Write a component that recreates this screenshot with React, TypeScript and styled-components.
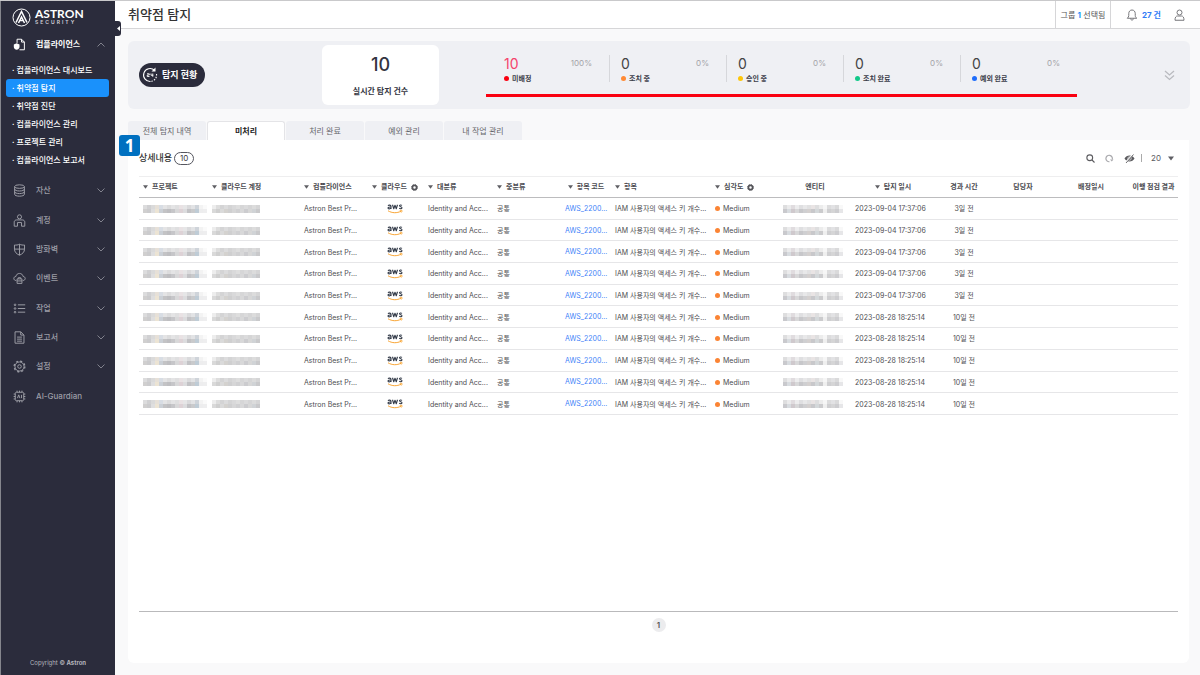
import React from "react";
import styled, { createGlobalStyle, css } from "styled-components";

const GlobalStyle = createGlobalStyle`
  * { box-sizing: border-box; }
  html, body, #root { height: 100%; }
  body {
    margin: 0;
    background: #f9f9fa;
    color: #3b3b3f;
    font-family: Inter, "Noto Sans CJK KR", sans-serif;
    font-size: 8px;
    line-height: 12px;
  }
  button, select { font: inherit; color: inherit; border: 0; background: none; padding: 0; cursor: pointer; }
  a { color: inherit; text-decoration: none; }
  ul { list-style: none; margin: 0; padding: 0; }
  h1, h2, p { margin: 0; }
  svg { display: block; flex: none; }
`;

const Shell = styled.div`
  display: flex;
  min-height: 100%;
  border-top: 1px solid #c9c9cb;
`;

/* Sidebar */
const Sidebar = styled.aside`
  display: flex;
  flex-direction: column;
  flex: 0 0 115px;
  background: #2b2c3c;
  border-left: 1px solid #85868d;
  color: #fff;
`;

const Brand = styled.a`
  display: flex;
  align-items: center;
  gap: 4px;
  height: 30px;
  padding: 2px 0 0 11px;
`;

const Wordmark = styled.span`
  display: flex;
  flex-direction: column;
  padding-top: 1px;
`;

const BrandName = styled.span`
  font: 700 12px/10px Lato, sans-serif;
`;

const BrandSub = styled.span`
  font: 600 5px/7px Inter, sans-serif;
  letter-spacing: 2px;
  color: #d4d4da;
`;

const Group = styled.button<{ $open?: boolean }>`
  display: flex;
  align-items: center;
  gap: 10px;
  width: 100%;
  height: ${(p) => (p.$open ? "27px" : "auto")};
  padding: 0 10px 0 12px;
  text-align: left;
  font-weight: ${(p) => (p.$open ? 700 : 500)};
  color: ${(p) => (p.$open ? "#fff" : "#9c9da6")};
  > span { flex: 1; line-height: 13px; }
`;

const SubMenu = styled.ul`
  display: grid;
  grid-auto-rows: 1fr;
  height: 108px;
  padding: 3px 6px 0 5px;
`;

const SubLink = styled.a<{ $active?: boolean }>`
  display: block;
  height: 18px;
  padding-left: 6px;
  border-radius: 3px;
  line-height: 18px;
  font-weight: 500;
  background: ${(p) => (p.$active ? "#1a91fb" : "transparent")};
`;

const Groups = styled.div`
  display: grid;
  grid-auto-rows: 1fr;
  height: 235px;
  margin-top: 10px;
`;

const Copyright = styled.p`
  margin-top: auto;
  padding-bottom: 6px;
  text-align: center;
  font-size: 6px;
  color: #b4b5bd;
`;

/* Main area */
const Main = styled.main`
  flex: 1;
  min-width: 0;
  display: flex;
  flex-direction: column;
`;

const TopBar = styled.header`
  display: flex;
  align-items: stretch;
  height: 28px;
  background: #fff;
  border-bottom: 1px solid #d6d6d8;
`;

const Collapse = styled.button`
  position: absolute;
  left: 115px;
  top: 21px;
  width: 6px;
  height: 15px;
  display: flex;
  align-items: center;
  justify-content: center;
  background: #2b2c3c;
  border-radius: 0 3px 3px 0;
`;

const PageTitle = styled.h1`
  flex: 1;
  padding-left: 13px;
  font-size: 13px;
  line-height: 27px;
  font-weight: 500;
  color: #333;
`;

const GroupPick = styled.button`
  width: 56px;
  border-left: 1px solid #d6d6d8;
  border-right: 1px solid #d6d6d8;
  color: #555;
  b { color: #1a91fb; }
`;

const UserTools = styled.div`
  display: flex;
  align-items: center;
  width: 89px;
  padding: 0 15px;
  justify-content: space-between;
  color: #77777b;
`;

const Alerts = styled.button`
  display: flex;
  align-items: center;
  gap: 4px;
  b { color: #2f7bf6; }
`;

const Content = styled.div`
  flex: 1;
  display: flex;
  flex-direction: column;
  padding: 12px 11px 12px 13px;
`;

const Summary = styled.section`
  display: flex;
  align-items: center;
  height: 68px;
  padding: 0 15px 0 11px;
  margin-right: -1px;
  border-radius: 6px;
  background: #eff0f4;
`;

const StatusPill = styled.h2`
  display: flex;
  align-items: center;
  gap: 4px;
  height: 24px;
  width: 66px;
  padding-left: 3px;
  border-radius: 12px;
  background: #2b2c3c;
  color: #fff;
  font-size: 9px;
  font-weight: 700;
  white-space: nowrap;
`;

const TotalCard = styled.div`
  width: 117px;
  height: 60px;
  margin-left: 117px;
  padding-top: 9px;
  border-radius: 6px;
  background: #fff;
  text-align: center;
  color: #33343f;
  font-weight: 700;
  strong { display: block; margin-bottom: 9px; font-size: 18px; line-height: 22px; font-weight: 500; }
`;

const Stats = styled.ul`
  display: flex;
  align-self: flex-start;
  margin: 0 auto 0 47px;
  padding: 14px 0 12px;
  border-bottom: 3px solid #fa0010;
`;

const Stat = styled.li`
  width: 117px;
  height: 27px;
  padding: 0 17px 0 11px;
  border-left: 1px solid #d6d7db;
  &:first-child { width: 123px; border-left-color: transparent; padding-left: 17px; }
`;

const StatTop = styled.div<{ $hot?: boolean }>`
  display: flex;
  justify-content: space-between;
  line-height: 16px;
  color: #a3a3a7;
  span { font-size: 14px; color: ${(p) => (p.$hot ? "#f5436b" : "#444")}; line-height: 18px; }
`;

const Dot = styled.i<{ $color: string }>`
  display: inline-block;
  width: 5px;
  height: 5px;
  margin-right: 3px;
  border-radius: 50%;
  background: ${(p) => p.$color};
  vertical-align: 0;
`;

const StatLabel = styled.div`
  font-size: 7px;
  font-weight: 700;
  color: #3b3c48;
`;

const Tabs = styled.div`
  display: flex;
  gap: 1px;
  margin-top: 12px;
`;

const Tab = styled.button<{ $active?: boolean }>`
  width: 78px;
  height: 19px;
  border-radius: 3px 3px 0 0;
  background: #eff0f4;
  color: #66666b;
  ${(p) =>
    p.$active &&
    css`
      background: #fff;
      border: 1px solid #e4e4e7;
      border-bottom: 0;
      color: #222;
      font-weight: 700;
    `}
`;

const Panel = styled.section`
  flex: 1;
  display: flex;
  flex-direction: column;
  padding: 8px 11px 0;
  border-radius: 0 0 6px 6px;
  background: #fff;
`;

const PanelHead = styled.div`
  display: flex;
  align-items: center;
  height: 20px;
  margin-bottom: 8px;
  h2 { font-size: 9px; font-weight: 500; color: #333; }
`;

const Count = styled.span`
  margin: 0 auto 0 2px;
  width: 20px;
  height: 13px;
  border: 1px solid #55565f;
  border-radius: 7px;
  text-align: center;
  line-height: 11px;
`;

const Tools = styled.div`
  display: flex;
  align-items: center;
  gap: 10px;
  padding-right: 4px;
  color: #5b5b5f;
`;

const Rule = styled.span`
  width: 1px;
  height: 8px;
  margin: 0 -1px 0 -4px;
  background: #aaa;
`;

const PageSize = styled.label`
  display: flex;
  align-items: center;
  gap: 3px;
  select { appearance: none; width: 14px; outline: 0; }
`;

const Grid = styled.table`
  width: 100%;
  height: 239px;
  table-layout: fixed;
  border-collapse: collapse;
  font-size: 7px;
  line-height: 10px;
  color: #4d4d51;
`;

const Th = styled.th<{ $center?: boolean }>`
  height: 21px;
  padding: 0 0 0 ${(p) => (p.$center ? "0" : "4px")};
  border-top: 1px solid #eeeeef;
  border-bottom: 1px solid #bcbcbe;
  font-weight: 700;
  color: #4a4a4f;
  white-space: nowrap;
  > div { display: flex; align-items: center; gap: 4px; justify-content: ${(p) => (p.$center ? "center" : "flex-start")}; }
`;

const Td = styled.td<{ $center?: boolean }>`
  padding: 2px 0 0 ${(p) => (p.$center ? "0" : "4px")};
  border-bottom: 1px solid #e6e6e8;
  white-space: nowrap;
  text-align: ${(p) => (p.$center ? "center" : "left")};
  > a { color: #3f83f8; vertical-align: 1px; }
`;

const AwsMark = styled.svg`
  margin: -2px auto 0;
`;

const Pager = styled.nav`
  display: flex;
  justify-content: center;
  margin-top: auto;
  padding: 6px 0 31px;
  border-top: 1px solid #b9b9bb;
  button { width: 14px; height: 14px; border-radius: 50%; background: #ececee; font-weight: 600; color: #555; }
`;

const StepBadge = styled.span`
  position: absolute;
  left: 119px;
  top: 135px;
  width: 21px;
  height: 21px;
  border-radius: 3px;
  background: #0070c0;
  color: #fff;
  text-align: center;
  font: 700 17px/21px "Noto Sans", sans-serif;
`;

const Triangle = ({ w = 5 }: { w?: number }) => (
  <svg width={w} height={w - 1} viewBox="0 0 6 4"><path d="M0 0h6L3 4z" fill="#5f5f64" /></svg>
);

const Chevron = ({ up }: { up?: boolean }) => (
  <svg width="8" height="5" viewBox="0 0 8 5" fill="none" stroke="#8b8c96" strokeWidth="0.9">
    <path d={up ? "M.5 4.5 4 1l3.5 3.5" : "M.5 .5 4 4 7.5 .5"} />
  </svg>
);

const Gear = () => (
  <svg width="7" height="7" viewBox="0 0 14 14">
    <circle cx="7" cy="7" r="4.2" fill="none" stroke="#55555a" strokeWidth="3.4" />
    <circle cx="7" cy="7" r="6" fill="none" stroke="#55555a" strokeWidth="1.8" strokeDasharray="2.4 2.312" />
  </svg>
);

const icons: Record<string, React.ReactNode> = {
  compliance: (
    <>
      <path d="M5 6V1.5h5.5L14 5v9.5H8M10.5 1.5V5H14" />
      <path d="M4.5 6.500 8 8v3c0 2-2 3-3.500 3.500C3 14 1 13 1 11V8z" fill="#fff" stroke="none" />
    </>
  ),
  asset: (
    <>
      <ellipse cx="8" cy="3.2" rx="6" ry="2.2" />
      <path d="M2 3.2v9.6c0 1.2 2.7 2.2 6 2.2s6-1 6-2.2V3.2M2 6.4c0 1.2 2.7 2.2 6 2.2s6-1 6-2.2M2 9.6c0 1.2 2.7 2.2 6 2.2s6-1 6-2.2" />
    </>
  ),
  account: (
    <>
      <circle cx="8" cy="3.5" r="2.5" />
      <path d="M5.5 15H1.5V10c0-1.700 1.300-2.700 3-2.700h7c1.700 0 3 1 3 2.700v5h-4v-4.500h-5V15z" />
    </>
  ),
  firewall: <path d="M8 1.5c2 1 4 1.200 6.200 1v5c0 3.500-2.500 6-6.200 7.500-3.700-1.500-6.200-4-6.200-7.500v-5c2.200 .2 4.200 0 6.200-1zM8 1.500V15M2 7.500h12" />,
  event: (
    <>
      <path d="M4 10.5C2 10.5 1 9.300 1 8s1-2.400 2.600-2.500C4 3 5.800 1.800 8 1.800s4 1.200 4.400 3.700C14 5.600 15 6.700 15 8s-1 2.500-3 2.500" />
      <path d="M5 8.500h6V14H5zM5 11h6M6.500 8.500V7h3v1.500" />
    </>
  ),
  job: (
    <>
      <path d="M6 3.500h9M6 8h9M6 12.500h9" />
      <circle cx="2.500" cy="3.500" r="1" /><circle cx="2.500" cy="8" r="1" /><circle cx="2.500" cy="12.500" r="1" />
    </>
  ),
  report: <path d="M2.500 1h7l4 4v10h-11zM9.500 1v4h4M5 7.500h6M5 10h6M5 12.500h6" />,
  setting: (
    <>
      <circle cx="8" cy="8" r="5.600" />
      <circle cx="8" cy="8" r="6.600" strokeWidth="1.600" strokeDasharray="2.600 2.584" />
      <circle cx="8" cy="8" r="2.200" />
    </>
  ),
  ai: (
    <>
      <rect x="2.800" y="2.800" width="10.400" height="10.400" rx="1.500" />
      <path d="M5 .8v2M8 .8v2M11 .8v2M5 13.200v2M8 13.200v2M11 13.200v2M.8 5h2M.8 8h2M.8 11h2M13.200 5h2M13.200 8h2M13.200 11h2M5.500 10 7 6l1.500 4M10.500 6v4" />
    </>
  ),
};

const MenuIcon = ({ name, bright }: { name: string; bright?: boolean }) => (
  <svg width="13" height="13" viewBox="0 0 16 16" fill="none" stroke={bright ? "#fff" : "#9c9da6"} strokeWidth="1.2">
    {icons[name]}
  </svg>
);

const Aws = () => (
  <AwsMark width="16" height="11" viewBox="0 0 32 22" role="img" aria-label="aws">
    <g fill="none" stroke="#333b49" strokeWidth="2.2">
      <path d="M2 5.500C3 4 8 3.500 8 6.500V12M8 8C4 7.500 2 8.500 2 10.200S6 12.500 8 10" />
      <path d="m11 3.500 2.500 8L16 4.500l2.500 7 2.500-8" strokeLinejoin="round" />
      <path d="M30 4.800c-2-1.200-5-1-5 .8 0 2.400 5 1.400 5 4 0 2-3.500 2.300-5.600 1" />
    </g>
    <path d="M2 15.500c8 5 18 5 26 1M25.500 15c2-.5 4-.5 4.500 0s-.3 2.500-1.500 4" fill="none" stroke="#f79a1c" strokeWidth="1.8" />
  </AwsMark>
);

/* Two tone rows per masked value: upper half, then lower half */
const masks = {
  project: [
    ["#dcdcdd", "#d0d0d2", "#dadada", "#e6e0d8", "#d8dde4", "#e4e4e5", "#dcdcdd", "#e4e4e5", "#dfdfe0", "#e9e2e4", "#e6e6e7", "#dadadc", "#e2e3e5", "#cfd4da", "#f3f3f3", "#fafafa"],
    ["#d0cfcf", "#cbcbcd", "#dededf", "#ece4d4", "#cbd0d6", "#c3c3c5", "#bebec1", "#c6c6c9", "#d8d8d9", "#ddd2d6", "#dcdcde", "#c2c2c5", "#c9cacc", "#bfccd6", "#ededee", "#eeeeef"],
  ],
  account: [
    ["#ededed", "#dddddd", "#d4d4d5", "#dcdcdd", "#d4d4d5", "#d9d9da", "#dedede", "#d6d6d7", "#dbdbdc", "#d5d5d6", "#dcdcdc", "#d5d5d6"],
    ["#d9d9d9", "#cfcfcf", "#dadada", "#d4d2cf", "#cfcfd0", "#d6d6d7", "#d0d0d2", "#d8d8d9", "#cccccf", "#d7d7d7", "#d0d3d6", "#c9c9cb"],
  ],
  entity: [
    ["#dededf", "#ebebec", "#e0dcdf", "#ededee", "#dfdfe1", "#e8e8e9", "#e1e1e2", "#e9e4e4", "#dededf", "#ececec", "#f6f6f6", "#dcdcdd", "#e2e2e4", "#dadadb", "#f8f8f8"],
    ["#c9c9cd", "#d8dce0", "#cfc9cd", "#d8d8d9", "#c7c7ca", "#cfcfd1", "#d4d0cf", "#c8c8cb", "#d4d8da", "#cbcbcd", "#efefef", "#cfcfd1", "#d5d5d6", "#cdcdd0", "#e6e6e8"],
  ],
};

const Redacted = ({ kind }: { kind: keyof typeof masks }) => (
  <svg width={masks[kind][0].length * 4} height="9" viewBox={`0 0 ${masks[kind][0].length * 4} 9`} aria-hidden="true">
    {masks[kind].map((line, r) =>
      line.map((fill, c) => <rect key={`${r}-${c}`} x={c * 4} y={r * 4} width="4" height="4" fill={fill} />)
    )}
  </svg>
);

const subItems = ["컴플라이언스 대시보드", "취약점 탐지", "취약점 진단", "컴플라이언스 관리", "프로젝트 관리", "컴플라이언스 보고서"];
const groups = [
  ["asset", "자산"], ["account", "계정"], ["firewall", "방화벽"], ["event", "이벤트"],
  ["job", "작업"], ["report", "보고서"], ["setting", "설정"], ["ai", "AI-Guardian"],
];
const stats = [
  { n: 10, pct: "100%", label: "미배정", color: "#fa0010" },
  { n: 0, pct: "0%", label: "조치 중", color: "#ff8a34" },
  { n: 0, pct: "0%", label: "승인 중", color: "#fdc60a" },
  { n: 0, pct: "0%", label: "조치 완료", color: "#12c98a" },
  { n: 0, pct: "0%", label: "예외 완료", color: "#1f6dfb" },
];
const tabs = ["전체 탐지 내역", "미처리", "처리 완료", "예외 관리", "내 작업 관리"];
const columns: { label: string; w: number; sort?: boolean; gear?: boolean; center?: boolean }[] = [
  { label: "프로젝트", w: 69, sort: true },
  { label: "클라우드 계정", w: 92, sort: true },
  { label: "컴플라이언스", w: 66, sort: true },
  { label: "클라우드", w: 58, sort: true, gear: true, center: true },
  { label: "대분류", w: 69, sort: true },
  { label: "중분류", w: 68, sort: true },
  { label: "항목 코드", w: 50, sort: true, center: true },
  { label: "항목", w: 100, sort: true },
  { label: "심각도", w: 68, sort: true, gear: true },
  { label: "엔티티", w: 72, center: true },
  { label: "탐지 일시", w: 84, sort: true, center: true },
  { label: "경과 시간", w: 58, center: true },
  { label: "담당자", w: 60, center: true },
  { label: "배정일시", w: 76, center: true },
  { label: "이행 점검 결과", w: 49, center: true },
];
const rows = Array.from({ length: 10 }, (_, i) =>
  i < 5 ? { at: "2023-09-04 17:37:06", ago: "3일 전" } : { at: "2023-08-28 18:25:14", ago: "10일 전" }
);

export default function App() {
  return (
    <>
      <GlobalStyle />
      <Shell>
        <Sidebar>
          <Brand href="#" aria-label="Astron Security">
            <svg width="19" height="19" viewBox="0 0 38 38" fill="none" stroke="#fff">
              <circle cx="19" cy="19" r="17" strokeWidth="2" />
              <path d="M8 29 19 7l11 22M13 30l6-12 6 12M16 25h6" strokeWidth="3" />
            </svg>
            <Wordmark>
              <BrandName>ASTRON</BrandName>
              <BrandSub>SECURITY</BrandSub>
            </Wordmark>
          </Brand>
          <Group $open aria-expanded="true">
            <MenuIcon name="compliance" bright />
            <span>컴플라이언스</span>
            <Chevron up />
          </Group>
          <SubMenu>
            {subItems.map((s, i) => (
              <li key={s}><SubLink href="#" $active={i === 1}>· {s}</SubLink></li>
            ))}
          </SubMenu>
          <Groups>
            {groups.map(([icon, label]) => (
              <Group key={icon}>
                <MenuIcon name={icon} />
                <span>{label}</span>
                {icon !== "ai" && <Chevron />}
              </Group>
            ))}
          </Groups>
          <Copyright>Copyright <b>© Astron</b></Copyright>
        </Sidebar>
        <Main>
          <TopBar>
            <PageTitle>취약점 탐지</PageTitle>
            <GroupPick>그룹 <b>1</b> 선택됨</GroupPick>
            <UserTools>
              <Alerts>
                <svg width="12" height="12" viewBox="0 0 24 24" fill="none" stroke="#77777b" strokeWidth="2">
                  <path d="M2.500 18.500h19c-2-1.500-3-3-3-5.500V9.500C18.500 5 16 2 12 2S5.500 5 5.500 9.500V13c0 2.500-1 4-3 5.500zM9 19c0 4 6 4 6 0" />
                </svg>
                <b>27 건</b>
              </Alerts>
              <button aria-label="내 계정">
                <svg width="11" height="12" viewBox="0 0 22 24" fill="none" stroke="#77777b" strokeWidth="2">
                  <circle cx="11" cy="7" r="5" />
                  <path d="M2 22.500c0-6 2-8.500 5-8.500h8c3 0 5 2.500 5 8.500z" />
                </svg>
              </button>
            </UserTools>
          </TopBar>
          <Content>
            <Summary>
              <StatusPill>
                <svg width="16" height="16" viewBox="0 0 32 32" fill="none" stroke="#fff" strokeWidth="2.2">
                  <path d="M25 6.500A13 13 0 1 0 17 29" />
                  <path d="M29 14a13 13 0 0 1-12 15" strokeDasharray="3 2.5" />
                  <path d="M27 1v8h-8z" fill="#fff" stroke="none" />
                  <path d="M10 13.500h4.500V16H10.500v3H15M18 13v3.500h4.500M21.500 13v6.500" strokeWidth="1.8" />
                </svg>
                탐지 현황
              </StatusPill>
              <TotalCard><strong>10</strong>실시간 탐지 건수</TotalCard>
              <Stats>
                {stats.map((s, i) => (
                  <Stat key={s.label}>
                    <StatTop $hot={i === 0}><span>{s.n}</span>{s.pct}</StatTop>
                    <StatLabel><Dot $color={s.color} />{s.label}</StatLabel>
                  </Stat>
                ))}
              </Stats>
              <button aria-label="펼치기">
                <svg width="11" height="11" viewBox="0 0 11 11" fill="none" stroke="#b9babf" strokeWidth="1.3">
                  <path d="M1 1l4.500 4L10 1M1 5.500l4.500 4 4.500-4" />
                </svg>
              </button>
            </Summary>
            <Tabs role="tablist">
              {tabs.map((t, i) => (
                <Tab key={t} role="tab" aria-selected={i === 1} $active={i === 1}>{t}</Tab>
              ))}
            </Tabs>
            <Panel>
              <PanelHead>
                <h2>상세내용</h2>
                <Count>10</Count>
                <Tools>
                  <button aria-label="검색">
                    <svg width="9" height="9" viewBox="0 0 18 18" fill="none" stroke="#5b5b5f" strokeWidth="2.200">
                      <circle cx="7.500" cy="7.500" r="5.800" /><path d="m12 12 5 5" />
                    </svg>
                  </button>
                  <button aria-label="새로고침">
                    <svg width="9" height="9" viewBox="0 0 18 18" fill="none" stroke="#a9a9ad" strokeWidth="2.400">
                      <path d="M9 15.500A6.500 6.500 0 1 1 14.500 11" /><path d="M10 11h7l-3.500 4z" fill="#a9a9ad" stroke="none" />
                    </svg>
                  </button>
                  <button aria-label="숨기기">
                    <svg width="11" height="9" viewBox="0 0 22 18">
                      <path d="M1 9c4-8 16-8 20 0-4 8-16 8-20 0z" fill="#5b5b5f" />
                      <circle cx="11" cy="9" r="3.500" fill="none" stroke="#fff" strokeWidth="1.200" />
                      <path d="M3 17 18 1" stroke="#fff" strokeWidth="3" /><path d="M4 18 19 1" stroke="#5b5b5f" strokeWidth="1.800" />
                    </svg>
                  </button>
                  <Rule />
                  <PageSize>
                    <select aria-label="페이지당 행 수"><option>20</option></select>
                    <Triangle w={6} />
                  </PageSize>
                </Tools>
              </PanelHead>
              <Grid>
                <colgroup>{columns.map((c) => <col key={c.label} width={c.w} />)}</colgroup>
                <thead>
                  <tr>
                    {columns.map((c) => (
                      <Th key={c.label} $center={c.center}>
                        <div>{c.sort && <Triangle />}{c.label}{c.gear && <Gear />}</div>
                      </Th>
                    ))}
                  </tr>
                </thead>
                <tbody>
                  {rows.map((r, i) => (
                    <tr key={i}>
                      <Td><Redacted kind="project" /></Td>
                      <Td><Redacted kind="account" /></Td>
                      <Td>Astron Best Pr...</Td>
                      <Td $center><Aws /></Td>
                      <Td>Identity and Acc...</Td>
                      <Td>공통</Td>
                      <Td><a href="#">AWS_2200...</a></Td>
                      <Td>IAM 사용자의 액세스 키 개수...</Td>
                      <Td><Dot $color="#fb8434" />Medium</Td>
                      <Td><Redacted kind="entity" /></Td>
                      <Td>{r.at}</Td>
                      <Td $center>{r.ago}</Td>
                      <Td /><Td /><Td />
                    </tr>
                  ))}
                </tbody>
              </Grid>
              <Pager aria-label="페이지"><button>1</button></Pager>
            </Panel>
          </Content>
        </Main>
      </Shell>
      <Collapse aria-label="메뉴 접기">
        <svg width="3" height="5" viewBox="0 0 3 5"><path d="M3 0v5L0 2.500z" fill="#fff" /></svg>
      </Collapse>
      <StepBadge>1</StepBadge>
    </>
  );
}
